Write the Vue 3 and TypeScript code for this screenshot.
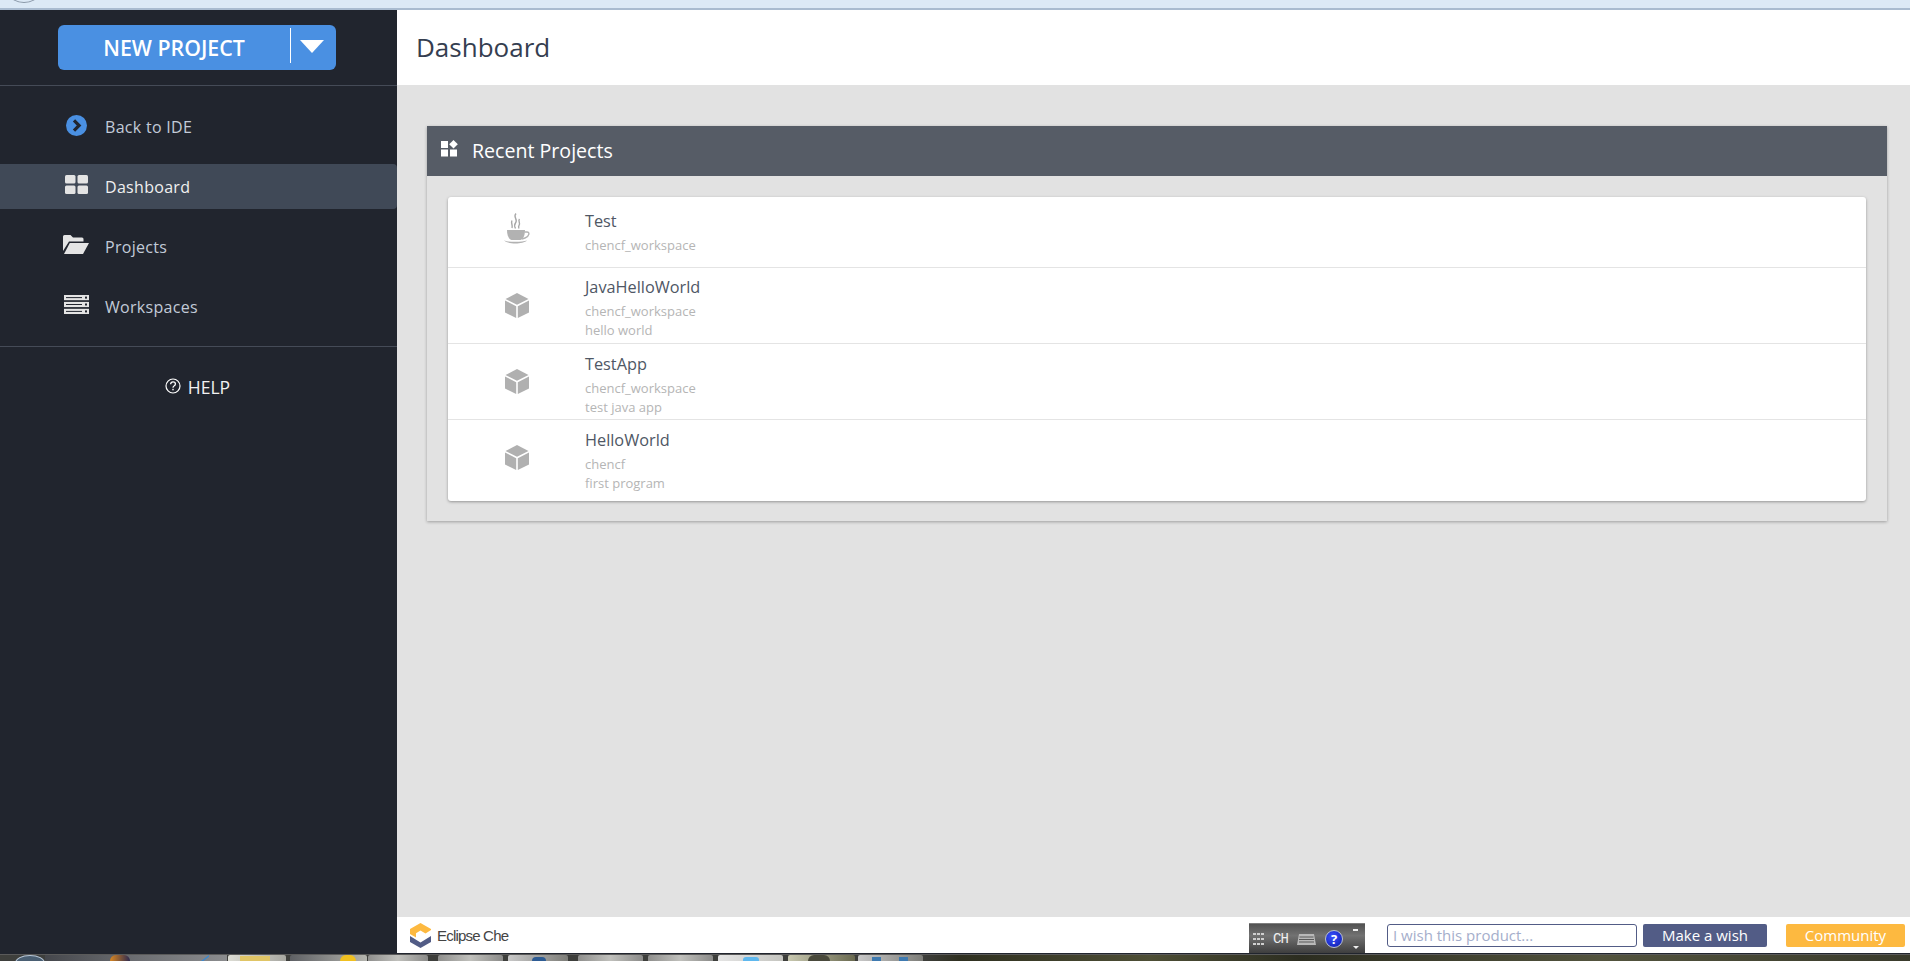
<script setup lang="ts">
interface Project { name: string; lines: string[]; icon: 'java' | 'box'; cls: string }
const projects: Project[] = [
  { name: 'Test', lines: ['chencf_workspace'], icon: 'java', cls: 'r1' },
  { name: 'JavaHelloWorld', lines: ['chencf_workspace', 'hello world'], icon: 'box', cls: 'r2' },
  { name: 'TestApp', lines: ['chencf_workspace', 'test java app'], icon: 'box', cls: 'r3' },
  { name: 'HelloWorld', lines: ['chencf', 'first program'], icon: 'box', cls: 'r4' },
]
interface Task { w: number; gap: number; c: string; bit?: string }
const tasks: Task[] = [
  { w: 182, gap: 0, c: 'strip' },
  { w: 58, gap: 1, c: 'light', bit: 'b-folder' },
  { w: 77, gap: 4, c: 'mid', bit: 'b-ie' },
  { w: 60, gap: 1, c: 'grey' },
  { w: 65, gap: 10, c: 'grey' },
  { w: 60, gap: 5, c: 'soft', bit: 'b-roof' },
  { w: 65, gap: 10, c: 'grey' },
  { w: 65, gap: 5, c: 'grey' },
  { w: 65, gap: 5, c: 'pale', bit: 'b-sky' },
  { w: 67, gap: 5, c: 'tan', bit: 'b-ring' },
  { w: 65, gap: 3, c: 'soft', bit: 'b-blue' },
]
</script>

<template>
  <div class="screen">
    <div class="browserbar"><span class="browser-circle"></span></div>
    <div class="main">
      <aside class="sidebar">
        <div class="newwrap">
          <div class="newbtn">
            <span class="newlabel">NEW PROJECT</span>
            <span class="newsep"></span>
            <span class="newcaret"><svg width="24" height="13" viewBox="0 0 24 13"><path d="M0 0H24L12 13Z" fill="#fff"/></svg></span>
          </div>
        </div>
        <nav class="nav">
          <div class="item">
            <span class="ic ic-back"><svg width="21" height="21" viewBox="0 0 21 21"><circle cx="10.5" cy="10.5" r="10.5" fill="#4a90e2"/><path d="M8 5.4L13.1 10.5L8 15.6" fill="none" stroke="#21252e" stroke-width="3.2"/></svg></span>
            <span>Back to IDE</span>
          </div>
          <div class="item active">
            <span class="ic ic-dash"><svg width="23" height="19" viewBox="0 0 23 19"><g fill="#e4e4e4"><rect x="0" y="0" width="10.5" height="8.5" rx="1.5"/><rect x="12.5" y="0" width="10.5" height="8.5" rx="1.5"/><rect x="0" y="10.5" width="10.5" height="8.5" rx="1.5"/><rect x="12.5" y="10.5" width="10.5" height="8.5" rx="1.5"/></g></svg></span>
            <span>Dashboard</span>
          </div>
          <div class="item">
            <span class="ic ic-proj"><svg width="26" height="19" viewBox="0 0 26 19"><path d="M0 18V1.5Q0 0 1.5 0H7.5L10 2.5H19Q20.5 2.5 20.5 4V6.4H6L0 16Z" fill="#e4e4e4"/><path d="M1 19L6.8 8H26L20 19Z" fill="#e4e4e4"/></svg></span>
            <span>Projects</span>
          </div>
          <div class="item">
            <span class="ic ic-work"><svg width="25" height="19" viewBox="0 0 25 19"><g fill="#e4e4e4"><rect y="0" width="25" height="5.2"/><rect y="6.9" width="25" height="5.2"/><rect y="13.8" width="25" height="5.2"/></g><g fill="#21252e"><rect x="2" y="2.1" width="16" height="1"/><rect x="2" y="9" width="16" height="1"/><rect x="2" y="15.9" width="16" height="1"/><rect x="21" y="1.6" width="2" height="2"/><rect x="21" y="8.5" width="2" height="2"/><rect x="21" y="15.4" width="2" height="2"/></g></svg></span>
            <span>Workspaces</span>
          </div>
        </nav>
        <div class="help">
          <svg class="helpic" width="16" height="16" viewBox="0 0 16 16"><circle cx="8" cy="8" r="7" fill="none" stroke="#fff" stroke-width="1.2"/><path d="M5.6 6.2Q5.8 3.9 8 3.9Q10.4 3.9 10.4 6Q10.4 7.2 9 8Q8 8.6 8 9.8" fill="none" stroke="#fff" stroke-width="1.3"/><rect x="7.3" y="10.8" width="1.4" height="1.5" fill="#fff"/></svg>
          <span>HELP</span>
        </div>
      </aside>
      <main class="content">
        <header class="topbar">Dashboard</header>
        <section class="body">
          <div class="panel">
            <div class="panelhead">
              <svg class="panelic" width="17" height="17" viewBox="0 0 17 17"><g fill="#fff"><rect x="0" y="1" width="7" height="7"/><rect x="0" y="9.5" width="7" height="7"/><rect x="9" y="9.5" width="7" height="7"/><path d="M12.5 0L16.8 4.3L12.5 8.6L8.2 4.3Z"/></g></svg>
              <span>Recent Projects</span>
            </div>
            <div class="panelbody">
              <div class="card">
                <div v-for="p in projects" :key="p.name" class="row" :class="p.cls">
                  <div class="rowic">
                    <svg v-if="p.icon === 'java'" width="26" height="31" viewBox="0 0 26 31">
                      <g fill="none" stroke="#a8a8a8" stroke-width="1.4">
                        <path d="M12 0.5C8.5 4 14.5 6.5 11.5 10C10 11.8 10.5 13.5 11.5 15.5"/>
                        <path d="M15.5 6C13.5 8.5 17 10 15 12.5C14.3 13.5 14.5 14.5 15 15.5"/>
                        <path d="M8 7.5C6.5 10 9 11.5 8 15"/>
                        <path d="M20.5 19H23C26 19 25.5 23.5 21 25L18 26" stroke="#b2b2b2"/>
                      </g>
                      <path d="M3 17H21C21 22 19.5 26 16.5 27H7.5C4.5 26 3 22 3 17Z" fill="#b2b2b2"/>
                      <path d="M0 27.5C4 31.5 19 31.5 23 27.5C18 29.3 5 29.3 0 27.5Z" fill="#b2b2b2"/>
                    </svg>
                    <svg v-else width="24" height="25" viewBox="0 0 24 25">
                      <g fill="#b0b0b0">
                        <path d="M12 0L23.5 6L12 11.8L0.5 6Z"/>
                        <path d="M0 7.6L11.2 13.2V25L0 19.4Z"/>
                        <path d="M24 7.6L12.8 13.2V25L24 19.4Z"/>
                      </g>
                    </svg>
                  </div>
                  <div class="rowtext">
                    <div class="pname">{{ p.name }}</div>
                    <div v-for="(l, i) in p.lines" :key="i" class="pline">{{ l }}</div>
                  </div>
                </div>
              </div>
            </div>
          </div>
        </section>
        <footer class="foot">
          <div class="logo">
            <svg width="21" height="25" viewBox="0 0 21 25">
              <path d="M10.5 0L21 6V7L15.5 10.5L10.5 7.5L6 10.3V14.5L0 11V6Z" fill="#fdb940"/>
              <path d="M0 13L10.5 19.5L21 13V19L10.5 25L0 19Z" fill="#525c86"/>
            </svg>
            <span class="logotext">Eclipse Che</span>
          </div>
          <div class="imebar">
            <span class="imedots"><i></i><i></i><i></i><i></i><i></i><i></i><i></i><i></i><i></i></span>
            <span class="imech">CH</span>
            <svg class="imekey" width="19" height="13" viewBox="0 0 19 13"><path d="M2 2H17L19 13H0Z" fill="#b9b9b9"/><g fill="#5a5a5a"><rect x="2.5" y="4.5" width="14" height="1"/><rect x="2" y="7" width="15" height="1"/><rect x="2" y="9.5" width="15" height="1"/></g></svg>
            <span class="imeq">?</span>
            <span class="imearrow"><i></i><b></b></span>
          </div>
          <input class="wish" type="text" placeholder="I wish this product..." />
          <span class="btn make">Make a wish</span>
          <span class="btn comm">Community</span>
        </footer>
      </main>
    </div>
    <div class="taskbar">
      <span class="startorb"></span>
      <span v-for="(t, i) in tasks" :key="i" class="task" :class="t.c" :style="{ width: t.w + 'px', marginLeft: t.gap + 'px' }">
        <span v-if="t.bit" class="bit" :class="t.bit"></span>
      </span>
      <span class="bit b-orange"></span>
      <span class="bit b-tick"></span>
    </div>
  </div>
</template>

<style>
html, body { margin: 0; padding: 0; overflow: hidden; background: #21252e; }
</style>

<style scoped>
.screen {
  width: 1910px; height: 961px; display: flex; flex-direction: column; overflow: hidden;
  font-family: "Open Sans", "Noto Sans", sans-serif;
}
.browserbar {
  height: 8px; flex: none; background: #dce9f6; border-bottom: 2px solid #a9bbd0; position: relative; overflow: hidden;
}
.browser-circle {
  position: absolute; left: 10px; top: -14px; width: 26px; height: 15px; border: 1px solid #8a98a8; border-radius: 50%;
}
.main { flex: 1; display: flex; min-height: 0; }
.sidebar { width: 397px; flex: none; background: #21252e; display: flex; flex-direction: column; }
.newwrap { height: 75px; flex: none; border-bottom: 1px solid #454b57; padding-left: 58px; }
.newbtn {
  width: 278px; height: 45px; margin-top: 15px; background: #4a90e2; border-radius: 6px; display: flex; align-items: center; color: #fff;
}
.newlabel { width: 232px; flex: none; text-align: center; font-size: 21.3px; font-weight: 600; }
.newsep { width: 1px; height: 35px; background: #fff; flex: none; margin-bottom: 4px; }
.newcaret { flex: 1; display: flex; justify-content: center; padding: 0 3px 2px 0; }
.nav { padding-top: 18px; padding-bottom: 17px; border-bottom: 1px solid #454b57; display: flex; flex-direction: column; gap: 15px; }
.item {
  height: 45px; display: flex; align-items: center; color: #c2cbd8; font-size: 16px; padding-left: 63px; box-sizing: border-box; border-radius: 0 4px 4px 0; letter-spacing: .3px;
}
.item.active { background: #404957; color: #f0f0f0; }
.ic { width: 42px; flex: none; display: flex; align-items: center; box-sizing: border-box; padding-bottom: 4px; }
.ic-back { padding-left: 3px; padding-bottom: 2px; }
.ic-dash { padding-left: 2px; }
.ic-work { padding-left: 1px; }
.help { display: flex; justify-content: center; align-items: center; gap: 7px; color: #f2f2f2; font-size: 17.5px; padding: 28px 2px 0 0; }
.helpic { margin-bottom: 3px; }
.content { flex: 1; display: flex; flex-direction: column; min-width: 0; background: #e2e2e2; }
.topbar {
  height: 75px; flex: none; background: #fff; color: #353e50; font-size: 26px; line-height: 75px; padding-left: 19px;
}
.body { flex: 1; padding: 41px 23px 0 30px; min-height: 0; }
.panel { height: 395px; box-shadow: 0 1px 3px rgba(0,0,0,.3); background: #e2e2e2; }
.panelhead {
  height: 50px; box-sizing: border-box; background: #565c66; color: #fff; display: flex; align-items: center; font-size: 19.6px; padding: 0 0 2px 14px;
}
.panelic { margin-right: 14px; margin-bottom: 3px; }
.panelbody { padding: 21px 21px 0; }
.card { background: #fff; border-radius: 3px; box-shadow: 0 1px 3px rgba(0,0,0,.35); height: 304px; overflow: hidden; }
.row { display: flex; border-bottom: 1px solid #e4e4e4; box-sizing: border-box; }
.row:last-child { border-bottom: 0; }
.r1 { height: 71px; }
.r2 { height: 76px; }
.r3 { height: 76px; }
.r4 { height: 81px; }
.rowic { width: 137px; flex: none; display: flex; align-items: center; justify-content: center; box-sizing: border-box; padding-bottom: 1px; }
.r1 .rowic { padding-bottom: 7px; }
.r4 .rowic { padding-bottom: 6px; }
.rowtext { flex: 1; }
.r1 .rowtext { padding-top: 13px; }
.r2 .rowtext { padding-top: 8px; }
.r3 .rowtext { padding-top: 9px; }
.r4 .rowtext { padding-top: 9px; }
.pname { font-size: 16.3px; color: #4f5765; line-height: 22px; height: 26px; }
.pline { font-size: 13px; color: #b5b5b5; line-height: 19px; }
.foot {
  height: 37px; flex: none; box-sizing: border-box; background: #fff; border-bottom: 1px solid #21252e; display: flex; align-items: center; padding-left: 13px;
}
.logo { display: flex; align-items: center; gap: 6px; }
.logotext { font-family: "Liberation Sans", sans-serif; font-size: 15px; color: #444; letter-spacing: -.8px; padding-top: 1px; }
.imebar {
  margin-left: auto; width: 116px; height: 30px; align-self: flex-end; box-sizing: border-box; border-top: 1px solid #7e7e7e;
  background: linear-gradient(#525252 0, #727272 40%, #3e3e3e 100%); display: flex; align-items: center; padding-left: 4px; color: #eee;
}
.imedots { display: grid; grid-template-columns: repeat(3, 3px); gap: 3px 1px; width: 11px; flex: none; }
.imedots i { width: 3px; height: 2px; background: #cfcfcf; display: block; }
.imech { font-family: "Liberation Mono", monospace; font-size: 14px; width: 17px; margin-left: 9px; flex: none; letter-spacing: -1px; }
.imekey { margin-left: 7px; flex: none; }
.imeq {
  width: 16px; height: 16px; border-radius: 50%; background: radial-gradient(circle at 40% 35%, #3a50ff, #0a1aa8); border: 1px solid #b9c0d0; margin-left: 9px; color: #fff; font-size: 13px; font-weight: 700; text-align: center; line-height: 16px; flex: none;
}
.imearrow { position: relative; width: 6px; height: 20px; margin-left: 10px; flex: none; }
.imearrow i { position: absolute; top: 0; left: 0; width: 5px; height: 2px; background: #eee; }
.imearrow b { position: absolute; bottom: 0; left: 0; width: 0; height: 0; border-left: 3px solid transparent; border-right: 3px solid transparent; border-top: 3px solid #eee; }
.wish {
  width: 250px; height: 23px; box-sizing: border-box; margin-left: 22px; border: 1px solid #525c86; border-radius: 3px; padding: 0 5px; font-family: inherit; font-size: 15px; outline: none; background: #fff;
}
.wish::placeholder { color: #a5aecb; opacity: 1; }
.btn { height: 23px; line-height: 23px; color: #fff; font-size: 15px; text-align: center; border-radius: 2px; flex: none; }
.make { width: 124px; background: #525c86; margin-left: 6px; }
.comm { width: 119px; background: #fdb940; margin-left: 19px; margin-right: 5px; }
.taskbar {
  height: 7px; flex: none; box-sizing: border-box; border-top: 1px solid #5a5a5a; position: relative; display: flex; overflow: hidden; align-items: flex-start; padding-left: 15px;
  background: linear-gradient(90deg, #3e3f3c 0, #3e3f3c 923px, #2f3020 960px, #4e4f36 1150px, #2c2d20 1300px, #53543e 1600px, #3a3b2c 100%);
}
.startorb { width: 30px; height: 16px; box-sizing: border-box; border-radius: 50%; border: 1px solid #b8c7d8; background: #4a5f73; flex: none; }
.task { height: 6px; flex: none; position: relative; border-radius: 2px 2px 0 0; }
.strip { background: linear-gradient(90deg, #45474c, #6c6e72 50%, #8b8c8e); border-radius: 0; }
.light { background: linear-gradient(90deg, #dcdcd4, #a8a8a2); }
.mid { background: linear-gradient(90deg, #5e6064, #b4b4ae); }
.grey { background: linear-gradient(90deg, #8f8f8d, #c0c0bc 50%, #8b8b89); }
.soft { background: linear-gradient(90deg, #c8c8c8, #7d7d78); }
.pale { background: linear-gradient(90deg, #e4e4e4, #c5c5c0); }
.tan { background: linear-gradient(90deg, #c8c8b0, #6a6a50); }
.bit { position: absolute; display: block; }
.b-folder { left: 12px; top: 1px; width: 30px; height: 5px; background: #e0c566; }
.b-ie { left: 50px; top: 0; width: 16px; height: 6px; border-radius: 8px 8px 0 0; background: #f0c020; }
.b-roof { left: 24px; top: 2px; width: 14px; height: 4px; background: #2e5c94; border-radius: 6px 6px 0 0; }
.b-sky { left: 25px; top: 2px; width: 16px; height: 4px; background: #5fb8ee; border-radius: 3px 3px 0 0; }
.b-ring { left: 20px; top: 0; width: 22px; height: 6px; background: #4a4a3c; border-radius: 10px 10px 0 0; }
.b-blue { left: 14px; top: 2px; width: 36px; height: 4px; background: linear-gradient(90deg, #3f7ab0 0 9px, transparent 9px 27px, #3f7ab0 27px); }
.b-orange { left: 110px; top: 0; width: 20px; height: 6px; border-radius: 10px 10px 0 0; background: linear-gradient(90deg, #d98620, #2e2a50); }
.b-tick { left: 201px; top: 0; width: 8px; height: 6px; background: #3f88cc; clip-path: polygon(100% 0, 100% 30%, 30% 100%, 0 100%); }
</style>
